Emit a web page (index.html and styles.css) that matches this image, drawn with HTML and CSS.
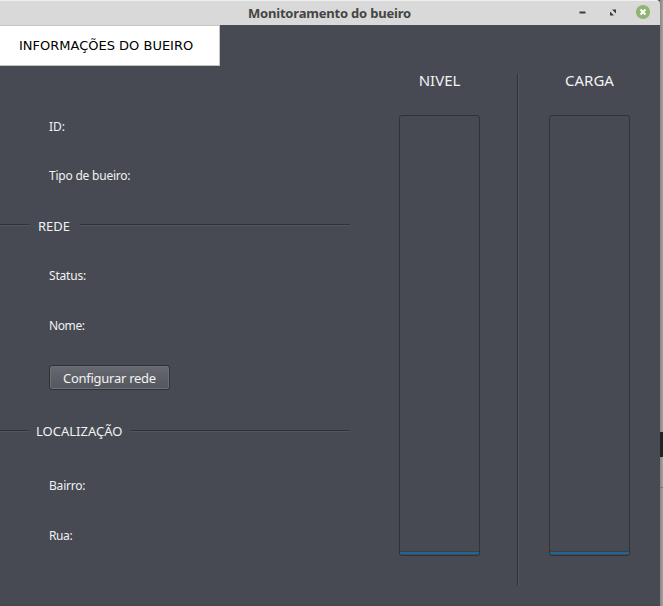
FILE: index.html
```html
<!DOCTYPE html>
<html lang="pt-BR">
<head>
<meta charset="utf-8">
<title>Monitoramento do bueiro</title>
<link rel="stylesheet" href="styles.css">
</head>
<body>
<div class="desktop">
  <div class="window">
    <header class="titlebar">
      <h1 class="title">Monitoramento do bueiro</h1>
      <div class="controls">
        <svg width="21" height="21" viewBox="0 0 21 21"><path d="M7.500 9.500h6v2h-6z" fill="#3b3b3b"/></svg>
        <svg width="21" height="21" viewBox="0 0 21 21"><path d="M10 7.500h4v4zM8 9.500v4h4z" fill="#3b3b3b"/></svg>
        <svg width="21" height="21" viewBox="0 0 21 21"><circle cx="11" cy="10" r="7.100" fill="#92b372"/><path d="M8.500 7.500l5 5M13.500 7.500l-5 5" stroke="#fff" stroke-width="1.900"/></svg>
      </div>
    </header>
    <main class="content">
      <section class="info">
        <div class="tab"><span>INFORMAÇÕES DO BUEIRO</span></div>
        <div class="field field-id"><span class="t-id">ID:</span></div>
        <div class="field raised"><span class="t-tipo">Tipo de bueiro:</span></div>
        <div class="group"><i class="lead"></i><h2 class="t-rede">REDE</h2><i class="rule"></i></div>
        <div class="field raised"><span class="t-status">Status:</span></div>
        <div class="field raised"><span class="t-nome">Nome:</span></div>
        <button class="button" type="button"><span>Configurar rede</span></button>
        <div class="group group-local"><i class="lead"></i><h2 class="t-local">LOCALIZAÇÃO</h2><i class="rule"></i></div>
        <div class="field field-bairro"><span class="t-bairro">Bairro:</span></div>
        <div class="field"><span class="t-rua">Rua:</span></div>
      </section>
      <section class="gauge">
        <h2 class="t-nivel">NIVEL</h2>
        <div class="bar"><div class="fill"></div></div>
      </section>
      <div class="divider"></div>
      <section class="gauge">
        <h2 class="t-carga">CARGA</h2>
        <div class="bar"><div class="fill"></div></div>
      </section>
    </main>
  </div>
  <div class="backdrop"><i></i><b></b></div>
</div>
</body>
</html>
```
FILE: styles.css
```css
* { box-sizing: border-box; }
body { margin: 0; overflow: hidden; font-family: "Noto Sans", "Open Sans", sans-serif; color: #f2f2f2; }
h1, h2 { margin: 0; font-weight: 400; }
span, h1, h2 { white-space: nowrap; }
.desktop { display: flex; width: 663px; height: 606px; background: #474a52; }
.window { width: 660px; height: 606px; border-bottom: 1px solid #4c424b; }
.titlebar { height: 25px; display: flex; background: #d9d9d9; border-top: 1px solid #efefef; border-radius: 0 4px 0 0; }
.title { width: 163px; margin-left: 248px; font-size: 13px; line-height: 24px; font-weight: 700; color: #454545; letter-spacing: -0.2px; }
.controls { display: flex; gap: 9px; margin: 1px 0 0 161px; }
.controls svg { display: block; }
.content { display: flex; height: 580px; }
.info { width: 350px; }
.tab { width: 220px; height: 41px; padding-left: 19px; background: #fff; border: 1px solid #c4c4c4; border-left: 0; color: #000; font: 13px/39px "DejaVu Sans", sans-serif; }
.field { height: 50px; padding-left: 49px; font-size: 12px; line-height: 50px; }
.field span { display: inline-block; }
.field-id { margin-top: 35px; height: 49px; line-height: 52px; }
.raised { line-height: 52px; }
.group { display: flex; height: 50px; font-size: 13px; }
.group h2 { font-size: 13px; line-height: 52px; }
.group-local h2 { line-height: 50px; }
.group i { height: 2px; margin-top: 24px; border-top: 1px solid #303236; border-bottom: 1px solid #53565c; }
.lead { width: 29px; }
.rule { flex: 1; }
.t-rede { width: 51px; padding-left: 9px; }
.t-local { width: 101px; padding-left: 7px; }
.t-tipo { letter-spacing: -0.22px; }
.t-status, .t-bairro { letter-spacing: -0.2px; }
.t-nome, .t-rua { letter-spacing: -0.4px; }
.button { display: block; width: 121px; height: 25px; margin: 15px 0 16px 49px; padding: 0 0 0 13px; text-align: left; font: 13px/22px "Noto Sans", sans-serif; letter-spacing: -0.27px; color: #f2f2f2; background: linear-gradient(#666970, #53565d); border: 1px solid #2f3136; border-radius: 3px; box-shadow: inset 0 0 0 1px #6d7076; }
.field-bairro { margin-top: 5px; }
.gauge { width: 81px; margin-left: 49px; padding-top: 44px; }
.gauge h2 { height: 46px; text-align: center; font-size: 15px; line-height: 22px; }
.bar { height: 441px; padding: 435px 0 0; border: 1px solid #303236; border-radius: 3px; }
.fill { height: 3px; border-top: 1px solid #38404a; background: #1f6596; }
.divider { width: 2px; height: 512px; margin: 49px -19px 0 37px; border-left: 1px solid #303236; border-right: 1px solid #53565c; }
.backdrop { width: 3px; background: linear-gradient(90deg, #87857f, #a5a4a1); }
.backdrop i { display: block; height: 25px; margin-top: 432px; background: #222; }
.backdrop b { display: block; height: 1px; margin-top: 30px; background: #777; }
```
